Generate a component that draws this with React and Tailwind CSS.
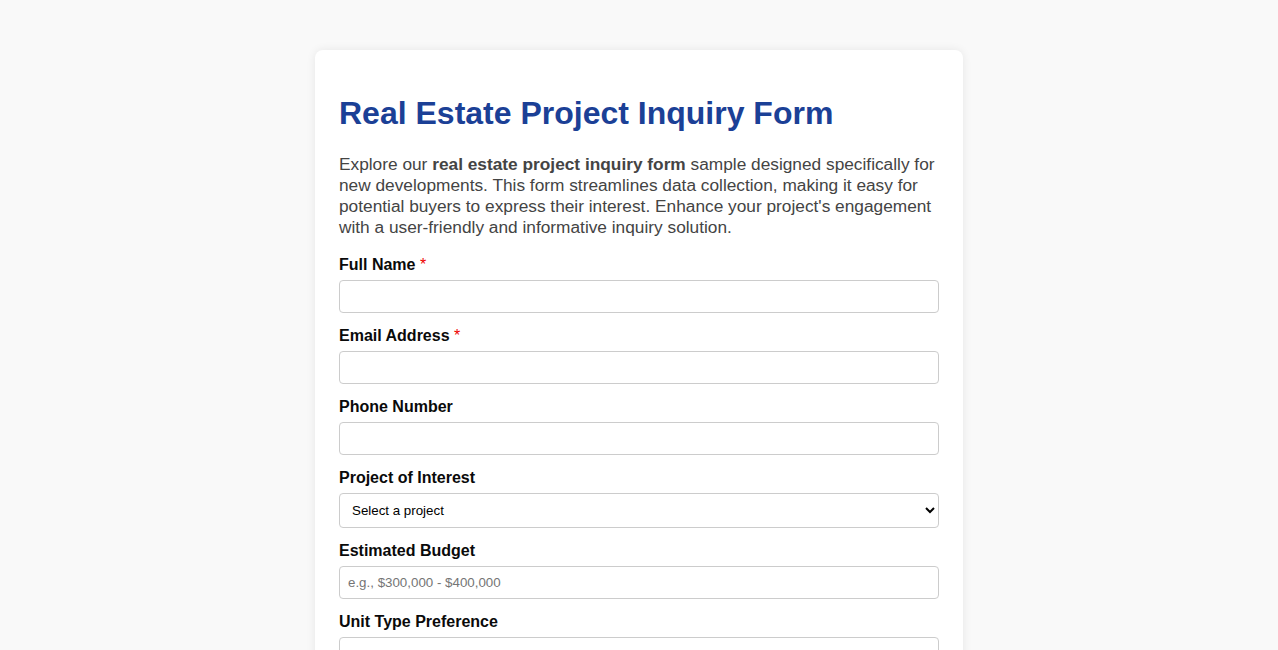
import React from 'react';

const inputClass =
  'block h-[33px] w-full rounded-[4px] border border-[#ccc] bg-white px-2 text-[13.33px] text-black placeholder:text-[#757575] focus:outline-none';

function Field({ label, required, children }) {
  return (
    <div className="mb-[14px]">
      <label className="mb-[6px] block text-base font-bold leading-[18px] text-[#0a0a0a]">
        {label}
        {required && <span className="font-normal text-[#e00]"> *</span>}
      </label>
      {children}
    </div>
  );
}

function App() {
  return (
    <div className="min-h-screen bg-[#f9f9f9] pb-12 pt-[50px] font-['Liberation_Sans',Arial,sans-serif]">
      <div className="mx-auto w-[648px] rounded-lg bg-white px-6 pb-6 pt-6 shadow-[0_0_10px_rgba(0,0,0,0.08)]">
        <h1 className="mb-[23px] mt-[21px] text-[32px] font-bold leading-[36px] text-[#1b4096]">
          Real Estate Project Inquiry Form
        </h1>
        <p className="mb-[18px] text-[17.3px] leading-[21px] text-[#444]">
          Explore our <strong>real estate project inquiry form</strong> sample designed specifically for
          new developments. This form streamlines data collection, making it easy for potential buyers
          to express their interest. Enhance your project's engagement with a user-friendly and
          informative inquiry solution.
        </p>
        <form>
          <Field label="Full Name" required>
            <input type="text" className={inputClass} />
          </Field>
          <Field label="Email Address" required>
            <input type="email" className={inputClass} />
          </Field>
          <Field label="Phone Number">
            <input type="tel" className={inputClass} />
          </Field>
          <Field label="Project of Interest">
            <select className="block h-[35px] w-full rounded-[4px] border border-[#ccc] bg-white px-2 text-[13.33px] text-black">
              <option>Select a project</option>
              <option>Skyline Towers</option>
              <option>Riverside Residences</option>
              <option>Greenfield Villas</option>
            </select>
          </Field>
          <Field label="Estimated Budget">
            <input type="text" placeholder="e.g., $300,000 - $400,000" className={inputClass} />
          </Field>
          <Field label="Unit Type Preference">
            <select className="block h-[35px] w-full rounded-[4px] border border-[#ccc] bg-white px-2 text-[13.33px] text-black">
              <option>Select a unit type</option>
              <option>Studio</option>
              <option>1 Bedroom</option>
              <option>2 Bedroom</option>
              <option>Penthouse</option>
            </select>
          </Field>
          <Field label="Additional Comments">
            <textarea rows={4} className="block w-full rounded-[4px] border border-[#ccc] bg-white p-2 text-[13.33px] text-black" />
          </Field>
          <button
            type="submit"
            className="w-full rounded-[4px] bg-[#1b4096] px-4 py-3 text-base font-bold text-white"
          >
            Submit Inquiry
          </button>
        </form>
      </div>
    </div>
  );
}

export default App;
